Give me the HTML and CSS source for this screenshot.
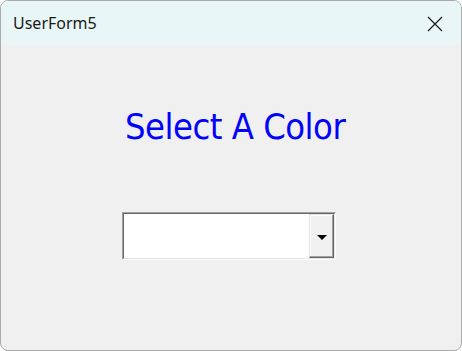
FILE: index.html
```html
<!DOCTYPE html>
<html>
  <head>
    <meta charset="utf-8">
    <title>UserForm5</title>
    <link rel="stylesheet" href="styles.css">
  </head>
  <body>
    <div class="form">
      <div class="titlebar">
        <span class="caption">UserForm5</span>
        <span class="close">
          <svg width="16" height="16" viewBox="0 0 16 16">
            <path d="M1 1 L15 15 M15 1 L1 15" stroke="#1a1a1a" stroke-width="1.2" fill="none"/>
          </svg>
        </span>
      </div>
      <div class="client">
        <p class="heading">Select A Color</p>
        <div class="combo">
          <div class="combo-inner">
            <div class="combo-text"></div>
            <div class="drop-button"><span class="arrow"></span></div>
          </div>
        </div>
      </div>
    </div>
  </body>
</html>
```

FILE: styles.css
```css
body {
  margin: 0;
  background-color: #ffffff;
}
.form {
  width: 462px;
  height: 351px;
  box-sizing: border-box;
  border: 1px solid #ababab;
  border-radius: 8px;
  overflow: hidden;
  background-color: #f0f0f0;
  display: flex;
  flex-direction: column;
}
.titlebar {
  height: 44px;
  background-color: #e9f6f8;
  display: flex;
  align-items: center;
  justify-content: space-between;
  padding: 0 18px 0 12px;
}
.caption {
  font-family: "Noto Sans", sans-serif;
  font-size: 16px;
  color: #1a1a1a;
}
.close {
  display: flex;
  margin-top: 2px;
}
.client {
  flex: 1;
  padding-left: 121px;
}
.heading {
  margin: 61px 0 0 3px;
  font-family: "DejaVu Sans Condensed", "DejaVu Sans", sans-serif;
  font-size: 36px;
  letter-spacing: -0.5px;
  line-height: 42px;
  color: #0000ff;
}
.combo {
  margin-top: 64px;
  width: 214px;
  height: 48px;
  box-sizing: border-box;
  border: 1px solid;
  border-color: #a0a0a0 #ffffff #ffffff #a0a0a0;
}
.combo-inner {
  height: 100%;
  box-sizing: border-box;
  border: 1px solid;
  border-color: #696969 #e3e3e3 #e3e3e3 #696969;
  background-color: #ffffff;
  display: flex;
}
.combo-text {
  flex: 1;
}
.drop-button {
  width: 25px;
  box-sizing: border-box;
  border: 1px solid;
  border-color: #e3e3e3 #696969 #696969 #e3e3e3;
  box-shadow: inset -1px -1px 0 #a0a0a0, inset 1px 1px 0 #ffffff;
  background-color: #f0f0f0;
  display: flex;
  align-items: center;
  justify-content: center;
}
.arrow {
  width: 0;
  height: 0;
  border-left: 5px solid transparent;
  border-right: 5px solid transparent;
  border-top: 5px solid #000000;
  margin-top: 2px;
}
```
